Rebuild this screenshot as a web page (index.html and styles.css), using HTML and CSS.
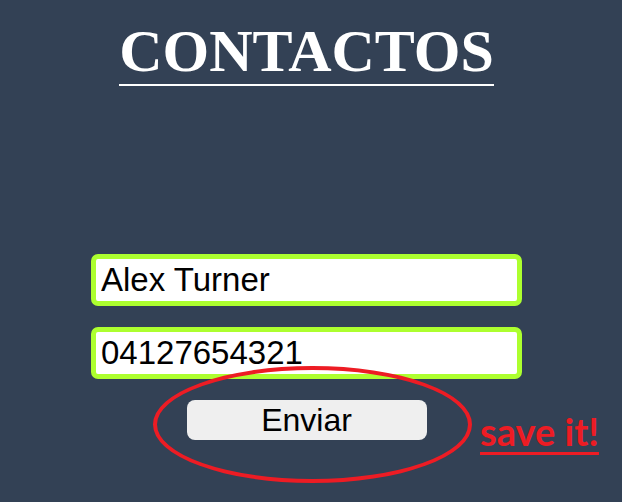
FILE: index.html
```html
<!DOCTYPE html>
<html lang="es">
<head>
<meta charset="utf-8">
<title>Contactos</title>
<link rel="stylesheet" href="styles.css">
</head>
<body>
<div class="page">
  <header class="header">
    <h1 class="title">CONTACTOS</h1>
  </header>
  <form class="form">
    <input class="field" type="text" value="Alex Turner">
    <input class="field" type="text" value="04127654321">
    <button class="send" type="button">Enviar</button>
  </form>
  <div class="circle"></div>
  <a class="note">save it!</a>
</div>
</body>
</html>
```
FILE: styles.css
```css
html, body {
  margin: 0;
  padding: 0;
  background: #334155;
}
.page {
  position: relative;
  width: 613px;
  height: 502px;
}
.header {
  display: flex;
  justify-content: center;
  padding-top: 21px;
}
.title {
  margin: 0;
  font-family: "Liberation Serif", "Times New Roman", serif;
  font-weight: 700;
  font-size: 60px;
  line-height: 60px;
  color: #ffffff;
  padding-bottom: 3px;
  border-bottom: 2px solid #ffffff;
}
.form {
  display: flex;
  flex-direction: column;
  align-items: center;
  gap: 21px;
  margin-top: 168px;
}
.field {
  box-sizing: border-box;
  width: 431px;
  height: 52px;
  border: 5px solid #adff2f;
  border-radius: 7px;
  background: #ffffff;
  padding: 0 5px;
  font-family: "Liberation Sans", Arial, sans-serif;
  font-size: 33px;
  color: #000000;
  outline: none;
}
.send {
  width: 240px;
  height: 40px;
  border: none;
  border-radius: 8px;
  background: #efefef;
  font-family: "Liberation Sans", Arial, sans-serif;
  font-size: 32px;
  color: #000000;
  padding: 0;
}
.circle {
  position: absolute;
  left: 153px;
  top: 366px;
  width: 311px;
  height: 109px;
  border: 4px solid #ed1c24;
  border-radius: 50%;
}
.note {
  position: absolute;
  left: 480px;
  top: 412px;
  font-family: Lato, "Open Sans", sans-serif;
  font-weight: 700;
  font-size: 38px;
  line-height: 38px;
  color: #ed1c24;
  text-decoration: underline;
  text-decoration-thickness: 3px;
  text-underline-offset: 6px;
}
```
